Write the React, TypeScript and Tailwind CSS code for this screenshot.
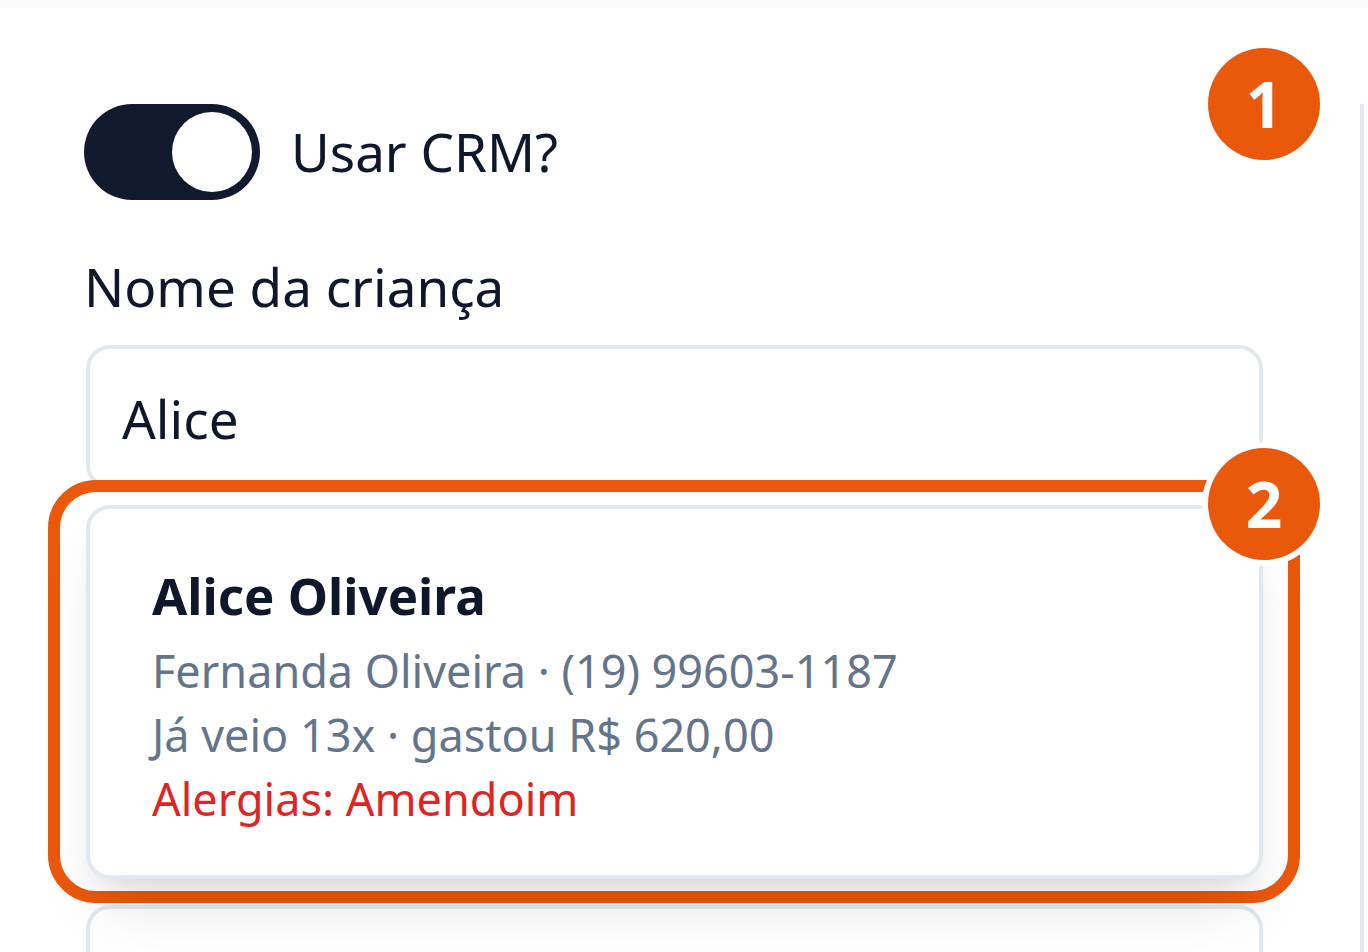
import React from "react";

const Badge = ({ n, className }: { n: string; className: string }) => (
  <div
    className={`absolute z-30 w-[112px] h-[112px] rounded-full bg-[#ea580c] ring-[6px] ring-white flex items-center justify-center text-white font-bold text-[64px] leading-none ${className}`}
  >
    {n}
  </div>
);

export default function App() {
  return (
    <div className="h-[952px] overflow-hidden bg-white text-[#0f172a] font-['Noto_Sans',sans-serif]">
      <div className="h-[8px] bg-[#f8fafc]" />
      <div className="flex">
        <div className="relative ml-[86px] w-[1177px] pt-[96px]">
          <Badge n="1" className="top-[40px] -right-[57px]" />

          {/* toggle */}
          <div className="flex items-center gap-[31px] -ml-[2px]">
            <div className="w-[176px] h-[96px] rounded-full bg-[#111a2e] p-[8px] flex justify-end">
              <div className="w-[80px] h-[80px] rounded-full bg-white" />
            </div>
            <span className="text-[53px] leading-[96px]">Usar CRM?</span>
          </div>

          <label className="block mt-[47px] -ml-[2px] text-[53px] leading-[80px]">
            Nome da criança
          </label>

          <div className="relative mt-[18px]">
            <div className="h-[144px] border-4 border-[#e2e8f0] rounded-[24px] px-[32px] pt-[4px] flex items-center text-[53px]">
              Alice
            </div>

            {/* dropdown */}
            <div className="absolute top-full left-0 right-0 mt-[16px] z-20">
              <div className="absolute -left-[38px] -right-[37px] -top-[25px] -bottom-[24px] border-[12px] border-[#ea580c] rounded-[48px] pointer-events-none" />
              <Badge n="2" className="-top-[57px] -right-[57px]" />
              <div className="relative bg-white border-4 border-[#e2e8f0] rounded-[24px] px-[62px] pt-[46px] pb-[44px] shadow-[0_40px_60px_-12px_rgba(0,0,0,0.1),0_16px_24px_-16px_rgba(0,0,0,0.1)]">
                <div className="text-[51px] leading-[80px] font-bold">Alice Oliveira</div>
                <div className="mt-[4px] text-[45px] leading-[64px] text-[#64748b]">
                  Fernanda Oliveira · (19) 99603-1187
                </div>
                <div className="text-[45px] leading-[64px] text-[#64748b]">
                  Já veio 13x · gastou R$ 620,00
                </div>
                <div className="text-[45px] leading-[64px] text-[#dc2626]">
                  Alergias: Amendoim
                </div>
              </div>
            </div>
          </div>

          <div className="mt-[416px] h-[148px] border-4 border-[#e2e8f0] rounded-[24px]" />
        </div>
        <div className="flex-1" />
        <div className="mt-[96px] mr-[4px] w-[4px] bg-[#e2e8f0]" />
      </div>
    </div>
  );
}
